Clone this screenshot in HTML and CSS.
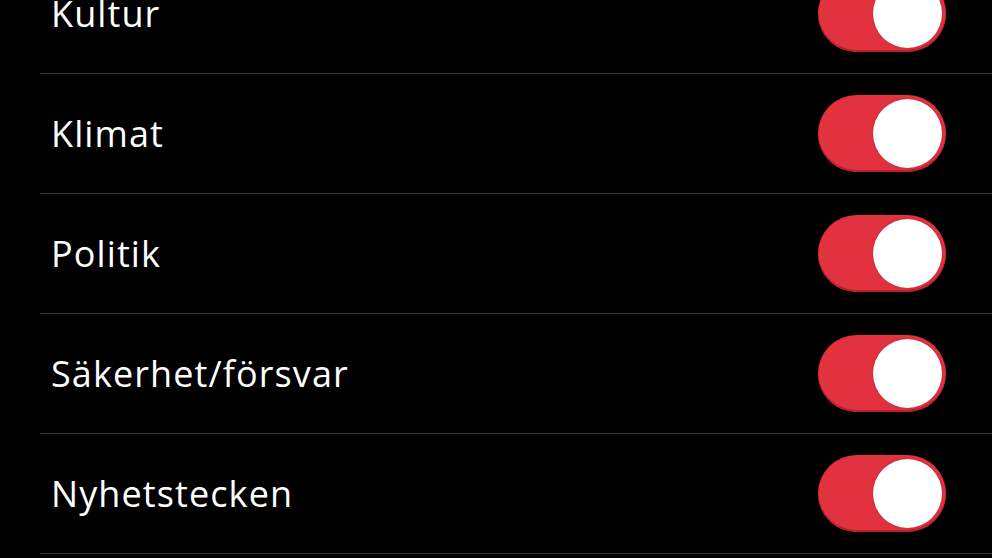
FILE: index.html
```html
<!DOCTYPE html>
<html lang="sv">
<head>
    <meta charset="UTF-8">
    <meta name="viewport" content="width=device-width, initial-scale=1.0">
    <title>Ämnen</title>
    <link rel="stylesheet" href="styles.css">
</head>
<body>

    <!-- Topic list -->
    <ul class="topics">
        <li class="topic">
            <span class="topic-name">Kultur</span>
            <span class="switch on"><span class="knob"></span></span>
        </li>
        <li class="topic">
            <span class="topic-name">Klimat</span>
            <span class="switch on"><span class="knob"></span></span>
        </li>
        <li class="topic">
            <span class="topic-name">Politik</span>
            <span class="switch on"><span class="knob"></span></span>
        </li>
        <li class="topic">
            <span class="topic-name">Säkerhet/försvar</span>
            <span class="switch on"><span class="knob"></span></span>
        </li>
        <li class="topic">
            <span class="topic-name">Nyhetstecken</span>
            <span class="switch on"><span class="knob"></span></span>
        </li>
    </ul>

</body>
</html>
```

FILE: styles.css
```css
body {
    margin: 0;
    background-color: #000;
    color: #fff;
    font-family: "Open Sans", "Noto Sans", sans-serif;
    overflow: hidden;
}

.topics {
    list-style: none;
    margin: -46px 0 0 40px;
    padding: 0;
}

.topic {
    display: flex;
    align-items: center;
    justify-content: space-between;
    height: 119px;
    padding: 0 46px 0 11px;
    border-bottom: 1px solid #333;
}

.topic-name {
    font-size: 36px;
    letter-spacing: 1.1px;
}

.switch {
    display: flex;
    align-items: center;
    width: 128px;
    height: 77px;
    padding: 0 4px;
    box-sizing: border-box;
    border-radius: 39px;
    background-color: #e2313f;
    box-shadow: inset 0 -2px 0 #b8202d;
}

.switch.on {
    justify-content: flex-end;
}

.knob {
    width: 69px;
    height: 69px;
    border-radius: 50%;
    background-color: #fff;
    box-shadow: 0 0 2px rgba(0, 0, 0, 0.3);
}
```
